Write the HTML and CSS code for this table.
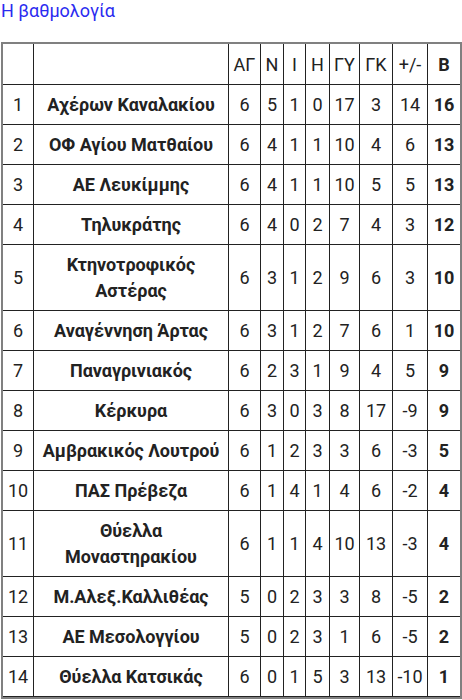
FILE: index.html
```html
<!DOCTYPE html>
<html lang="el">
<head>
<meta charset="utf-8">
<link rel="stylesheet" href="styles.css">
</head>
<body>
<div class="page">
  <div class="title">Η βαθμολογία</div>
  <table class="standings">
    <thead>
      <tr>
        <th class="c-pos"></th><th class="c-team"></th>
        <th class="c-ag">ΑΓ</th><th class="c-n">Ν</th><th class="c-i">Ι</th><th class="c-h">Η</th>
        <th class="c-gy">ΓΥ</th><th class="c-gk">ΓΚ</th><th class="c-diff">+/-</th><th class="c-b pts">Β</th>
      </tr>
    </thead>
    <tbody>
      <tr><td>1</td><td class="team">Αχέρων Καναλακίου</td><td>6</td><td>5</td><td>1</td><td>0</td><td>17</td><td>3</td><td>14</td><td class="pts">16</td></tr>
      <tr><td>2</td><td class="team">ΟΦ Αγίου Ματθαίου</td><td>6</td><td>4</td><td>1</td><td>1</td><td>10</td><td>4</td><td>6</td><td class="pts">13</td></tr>
      <tr><td>3</td><td class="team">ΑΕ Λευκίμμης</td><td>6</td><td>4</td><td>1</td><td>1</td><td>10</td><td>5</td><td>5</td><td class="pts">13</td></tr>
      <tr><td>4</td><td class="team">Τηλυκράτης</td><td>6</td><td>4</td><td>0</td><td>2</td><td>7</td><td>4</td><td>3</td><td class="pts">12</td></tr>
      <tr><td>5</td><td class="team">Κτηνοτροφικός Αστέρας</td><td>6</td><td>3</td><td>1</td><td>2</td><td>9</td><td>6</td><td>3</td><td class="pts">10</td></tr>
      <tr><td>6</td><td class="team">Αναγέννηση Άρτας</td><td>6</td><td>3</td><td>1</td><td>2</td><td>7</td><td>6</td><td>1</td><td class="pts">10</td></tr>
      <tr><td>7</td><td class="team">Παναγρινιακός</td><td>6</td><td>2</td><td>3</td><td>1</td><td>9</td><td>4</td><td>5</td><td class="pts">9</td></tr>
      <tr><td>8</td><td class="team">Κέρκυρα</td><td>6</td><td>3</td><td>0</td><td>3</td><td>8</td><td>17</td><td>-9</td><td class="pts">9</td></tr>
      <tr><td>9</td><td class="team">Αμβρακικός Λουτρού</td><td>6</td><td>1</td><td>2</td><td>3</td><td>3</td><td>6</td><td>-3</td><td class="pts">5</td></tr>
      <tr><td>10</td><td class="team">ΠΑΣ Πρέβεζα</td><td>6</td><td>1</td><td>4</td><td>1</td><td>4</td><td>6</td><td>-2</td><td class="pts">4</td></tr>
      <tr><td>11</td><td class="team">Θύελλα Μοναστηρακίου</td><td>6</td><td>1</td><td>1</td><td>4</td><td>10</td><td>13</td><td>-3</td><td class="pts">4</td></tr>
      <tr><td>12</td><td class="team">Μ.Αλεξ.Καλλιθέας</td><td>5</td><td>0</td><td>2</td><td>3</td><td>3</td><td>8</td><td>-5</td><td class="pts">2</td></tr>
      <tr><td>13</td><td class="team">ΑΕ Μεσολογγίου</td><td>5</td><td>0</td><td>2</td><td>3</td><td>1</td><td>6</td><td>-5</td><td class="pts">2</td></tr>
      <tr><td>14</td><td class="team">Θύελλα Κατσικάς</td><td>6</td><td>0</td><td>1</td><td>5</td><td>3</td><td>13</td><td>-10</td><td class="pts">1</td></tr>
    </tbody>
  </table>
</div>
</body>
</html>
```

FILE: styles.css
```css
html, body {
  margin: 0;
  padding: 0;
  background: #ffffff;
}

.page {
  padding-left: 1px;
  font-family: Roboto, "Noto Sans", sans-serif;
}

.title {
  color: #2b2bf0;
  font-size: 18px;
  line-height: 22px;
  margin: 0 0 20px 0;
}

.standings {
  border-collapse: separate;
  border-spacing: 0;
  table-layout: fixed;
  width: 461px;
  border: 2px solid #808080;
  color: #222222;
  font-size: 18px;
}

.standings th,
.standings td {
  box-sizing: border-box;
  border-right: 1px solid #222222;
  border-bottom: 1px solid #222222;
  padding: 7px 3px 6px 3px;
  line-height: 26px;
  text-align: center;
  vertical-align: middle;
  font-weight: normal;
}

.standings th:last-child,
.standings td:last-child {
  border-right: none;
}

.standings thead th {
  height: 41px;
}

.standings .team {
  font-weight: bold;
  padding-left: 6px;
  padding-right: 6px;
}

.standings .pts {
  font-weight: bold;
}

.c-pos { width: 31px; }
.c-team { width: 195px; }
.c-ag { width: 32px; }
.c-n { width: 23px; }
.c-i { width: 22px; }
.c-h { width: 24px; }
.c-gy { width: 30px; }
.c-gk { width: 33px; }
.c-diff { width: 35px; }
.c-b { width: 32px; }
```
